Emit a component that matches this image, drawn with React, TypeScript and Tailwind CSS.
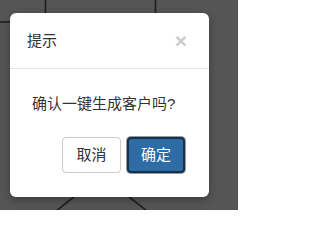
export default function App() {
    return (
        <div className="relative w-[238px] h-[210px] overflow-hidden bg-[#555555] pt-[13px] pl-[10px] font-['Liberation_Sans','Noto_Sans_CJK_SC',sans-serif]">
            {/* page behind the backdrop */}
            <svg className="absolute inset-0" width="238" height="210" viewBox="0 0 238 210">
                <g stroke="#1e1e1e" strokeWidth="1.6" fill="none">
                    <line x1="45.5" y1="0" x2="45.5" y2="14" />
                    <line x1="155.5" y1="0" x2="155.5" y2="14" />
                    <line x1="0" y1="22" x2="11" y2="22" />
                    <line x1="56" y1="211" x2="75" y2="196" />
                    <line x1="128" y1="196" x2="147" y2="211" />
                </g>
            </svg>

            {/* Dialog */}
            <div className="relative w-[199px] h-[184px] bg-white rounded-[6px] shadow-[0_3px_9px_rgba(0,0,0,0.3)]">
                <div className="h-[56px] flex items-center justify-between pl-[17px] pr-[22px] border-b border-[#e5e5e5]">
                    <span className="text-[15px] leading-[20px] text-[#333]">提示</span>
                    <span className="text-[21px] leading-[20px] font-bold text-[#cccccc]">×</span>
                </div>
                <div className="pt-[24px] pl-[22px] text-[15px] leading-[21px] text-[#333]">
                    确认一键生成客户吗?
                </div>
                <div className="mt-[23px] flex justify-end gap-[6px] pr-[24px]">
                    <button className="h-[36px] w-[59px] rounded-[4px] border border-[#cccccc] bg-white text-[15px] text-[#333]">
                        取消
                    </button>
                    <button className="h-[36px] w-[58px] rounded-[4px] border-2 border-[#15324d] ring-1 ring-[#9a9a9a] bg-[#2d6ca5] text-[15px] text-white">
                        确定
                    </button>
                </div>
            </div>
        </div>
    );
}
